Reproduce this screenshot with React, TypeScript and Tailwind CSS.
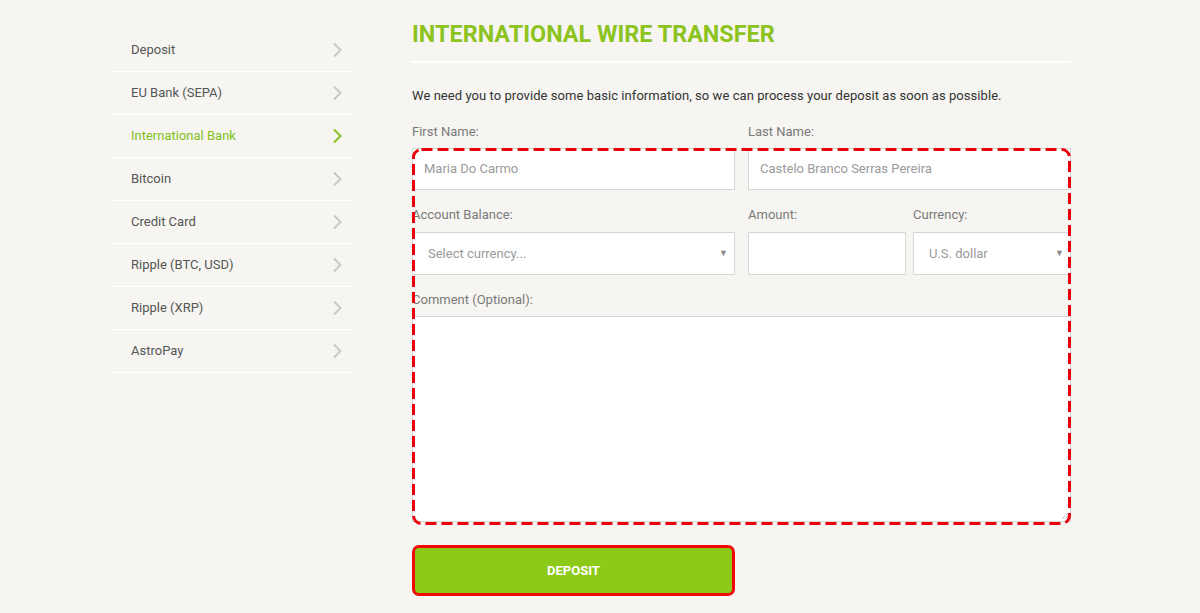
const METHODS = [
  'Deposit',
  'EU Bank (SEPA)',
  'International Bank',
  'Bitcoin',
  'Credit Card',
  'Ripple (BTC, USD)',
  'Ripple (XRP)',
  'AstroPay',
]

const ACTIVE = 'International Bank'

export default function App() {
  return (
    <div
      className="min-h-[613px] w-[1200px] bg-[#f6f5f1] flex gap-[60px] pl-[112px]"
      style={{ fontFamily: 'Roboto, "Liberation Sans", sans-serif' }}
    >
      {/* Side menu */}
      <nav className="w-[240px] pt-[29px] flex flex-col">
        {METHODS.map((m) => {
          const active = m === ACTIVE
          return (
            <div
              key={m}
              className="h-[43px] flex items-center justify-between pl-[19px] pr-[10px] border-b border-white"
            >
              <span className={`text-[13px] ${active ? 'text-[#84c01e]' : 'text-[#555555]'}`}>{m}</span>
              <svg width="10" height="16" viewBox="0 0 10 16" className={active ? 'text-[#84c01e]' : 'text-[#c9c9c9]'}>
                <path d="M2 1.5 L8.5 8 L2 14.5" fill="none" stroke="currentColor" strokeWidth="2" />
              </svg>
            </div>
          )
        })}
      </nav>

      {/* Form */}
      <main className="w-[659px] pt-[19px]">
        <h1 className="text-[23.4px] leading-[30px] font-bold text-[#8cc31e]">
          INTERNATIONAL WIRE TRANSFER
        </h1>
        <div className="mt-[12px] h-[2px] bg-white" />
        <p className="mt-[23px] text-[13px] leading-[20px] text-[#333333] tracking-[0.06px]">
          We need you to provide some basic information, so we can process your deposit as soon as possible.
        </p>

        <div className="mt-[16px] grid grid-cols-2 gap-x-[13px]">
          <Label>First Name:</Label>
          <Label>Last Name:</Label>
        </div>

        <div className="relative mt-[6px]">
          <div className="grid grid-cols-2 gap-x-[13px]">
            <Field value="Maria Do Carmo" />
            <Field value="Castelo Branco Serras Pereira" />
          </div>

          <div className="mt-[15px] grid grid-cols-2 gap-x-[13px]">
            <div>
              <Label>Account Balance:</Label>
              <Select value="Select currency..." />
            </div>
            <div className="grid grid-cols-[158px_1fr] gap-x-[7px]">
              <div>
                <Label>Amount:</Label>
                <div className="mt-[7px]">
                  <Field value="" tall />
                </div>
              </div>
              <div>
                <Label>Currency:</Label>
                <Select value="U.S. dollar" />
              </div>
            </div>
          </div>

          <div className="mt-[15px]">
            <Label>Comment (Optional):</Label>
            <div className="mt-[6px] h-[206px] bg-white border border-[#d6d6d6] relative">
              <svg className="absolute right-[1px] bottom-[1px]" width="9" height="9" viewBox="0 0 9 9">
                <path d="M8 2 L2 8 M8 5 L5 8" stroke="#888" strokeWidth="1" strokeDasharray="1 1" />
              </svg>
            </div>
          </div>

          {/* highlight overlay */}
          <svg className="pointer-events-none absolute left-0 top-0 w-full h-[calc(100%+3px)] overflow-visible">
            <rect
              x="1.5"
              y="1.5"
              width="calc(100% - 3px)"
              height="calc(100% - 3px)"
              rx="8"
              fill="none"
              stroke="#e8000b"
              strokeWidth="3"
              strokeDasharray="11 5"
            />
          </svg>
        </div>

        <button
          type="button"
          className="mt-[23px] w-[323px] h-[51px] bg-[#8cc919] border-[3px] border-[#ef0a0a] rounded-[7px] text-white text-[13px] font-bold"
        >
          DEPOSIT
        </button>
      </main>
    </div>
  )
}

function Label({ children }: { children: string }) {
  return <div className="text-[13px] leading-[20px] text-[#7a7a7a]">{children}</div>
}

function Field({ value, tall }: { value: string; tall?: boolean }) {
  return (
    <div
      className={`${tall ? 'h-[43px]' : 'h-[42px]'} bg-white border border-[#d6d6d6] flex items-center pl-[11px] text-[13px] text-[#9a9a9a]`}
    >
      {value}
    </div>
  )
}

function Select({ value }: { value: string }) {
  return (
    <div className="mt-[7px] h-[43px] bg-white border border-[#d6d6d6] flex items-center justify-between pl-[15px] pr-[6px] text-[13px] text-[#9a9a9a]">
      <span>{value}</span>
      <span className="text-[9px] text-[#8a8a8a]">▼</span>
    </div>
  )
}
